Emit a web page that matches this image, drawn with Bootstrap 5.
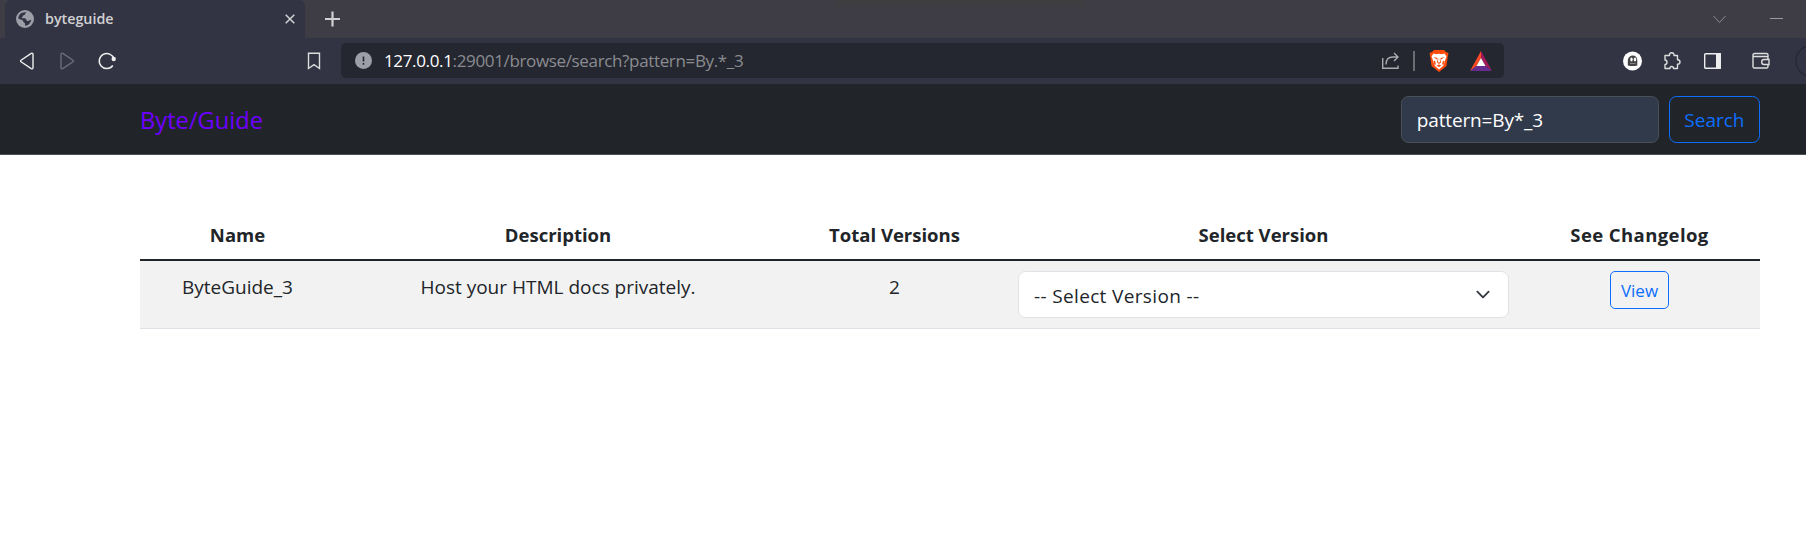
<!DOCTYPE html>
<html lang="en">
<head>
<meta charset="utf-8">
<title>byteguide</title>
<link href="https://cdn.jsdelivr.net/npm/bootstrap@5.3.0/dist/css/bootstrap.min.css" rel="stylesheet">
<style>
html{font-size:20px}
body{font-family:"Open Sans","Noto Sans",sans-serif;line-height:30px;overflow:hidden}
svg{display:block;flex:none}
.tabstrip{height:38px;background:linear-gradient(rgba(62,63,62,.8),rgba(62,63,62,0)) 835px 0/250px 10px no-repeat,#3e3d46;padding-left:5px}
.tab-item{width:300px;height:38px;background:#323443;border-radius:6px 6px 0 0;padding:0 10px 0 11px}
.tab-title{font-size:14.3px;font-weight:600;color:#d0d0d2;margin-left:11px;line-height:36px}
.toolbar{height:46px;background:#323443;padding-left:17px}
.addr{width:1163px;height:35px;margin-top:-1px;border-radius:5px;background:#242730;padding-left:14px}
.addr-text{font-size:17px;letter-spacing:-.35px;color:#8b8c90;margin-left:12px;line-height:33px;white-space:nowrap}
.addr-text b{font-weight:400;color:#fff}
.topbar{height:71px;background:#212529;border-bottom:1px solid #495057;padding:0 46px 0 140px}
.brand{font-size:23.7px;color:#6f00ff;text-decoration:none;padding-top:2px}
.query,.query:focus{width:258px;height:47px;background:#313a4b;border-color:#495057;color:#fff;letter-spacing:-.15px}
.fit{font-size:19px;line-height:30px;padding-top:8.5px;padding-bottom:6.5px}
.btn.fit{padding-inline:14.5px}
.fit-sm{font-size:17px;line-height:26.25px;padding:6px 9.5px 4px}
.listing{margin:54px 46px 0 140px}
.listing table{table-layout:fixed;font-size:19px}
.listing thead th{border-bottom:2px solid #212529;font-weight:700;font-size:18.5px;line-height:30px;padding:11px 10px 9px}
.listing thead th:last-child{letter-spacing:.4px}
.listing td{padding:11px 10px 9px}
.listing td.control{padding:10px}
.listing .form-select{letter-spacing:.35px;background-size:20px 15px}
</style>
</head>
<body>
<div class="tabstrip d-flex align-items-center">
  <div class="tab-item d-flex align-items-center">
    <svg width="18" height="18" viewBox="0 0 18 18"><circle cx="9" cy="9" r="9" fill="#9c9fa8"/><path d="M9 2.200h1.500c-.8 1-1.500 1-1.500 2 0 .8-1 1-2 1.300-.6.500 0 1.500-1.500 2.200 1 .8 3 .3 4 .8 1.500.8.500 2.300 2 2.500 1.500.2 1.800-.8 3.800-1.200C14.500 13 12.500 15.800 9 15.800v-2c0-1-2-1.500-2-3 0-1-2.500-1-4.700-2.300C2.500 5 5 2.300 9 2.200z" fill="#323443"/></svg>
    <span class="tab-title">byteguide</span>
    <svg class="ms-auto" width="10" height="10" viewBox="0 0 10 10"><path d="M.7.7l8.600 8.600M9.300.7L.7 9.300" stroke="#d3d3d5" stroke-width="1.500"/></svg>
  </div>
  <svg style="margin-left:19px" width="16" height="16" viewBox="0 0 16 16"><path d="M8.500 .5v15M1 8h15" stroke="#d0d0d2" stroke-width="2.200"/></svg>
  <svg style="margin-left:1373px" width="14" height="9" viewBox="0 0 14 9"><path d="M.5 1l6 6.500L12.500 1" fill="none" stroke="#8b8b90"/></svg>
  <svg style="margin-left:43px" width="14" height="3" viewBox="0 0 14 3"><path d="M0 .5h13" stroke="#9b9b9f"/></svg>
</div>
<div class="toolbar d-flex align-items-center">
  <svg width="20" height="20" viewBox="0 0 20 20"><path d="M14.200 2.300L4 9.200q-.9.800 0 1.600l10.200 6.900q1.600.6 1.800-1V3.300q-.2-1.600-1.800-1z" fill="none" stroke="#eee" stroke-width="1.400"/></svg>
  <svg style="margin-left:20px" width="20" height="20" viewBox="0 0 20 20"><path d="M5.800 2.300L16 9.200q.9.800 0 1.600L5.800 17.700q-1.600.6-1.800-1V3.300q.2-1.600 1.800-1z" fill="none" stroke="#6b6c77" stroke-width="1.400"/></svg>
  <svg style="margin-left:20px" width="20" height="20" viewBox="0 0 20 20"><path d="M17 8A7.500 7.500 0 1 0 15.800 14.500" fill="none" stroke="#eee" stroke-width="1.500"/><circle cx="16.700" cy="8" r="2.200" fill="#eee"/></svg>
  <svg style="margin-left:187px" width="20" height="20" viewBox="0 0 20 20"><path d="M4.500 2.200h11v15.300L10 13.700l-5.500 3.800z" fill="none" stroke="#ddd" stroke-width="1.400"/></svg>
  <div class="addr d-flex align-items-center" style="margin-left:17px">
    <svg width="17" height="17" viewBox="0 0 17 17"><circle cx="8.500" cy="8.500" r="8.500" fill="#9c9fa8"/><path d="M8.500 4.500v5M8.500 11v1.800" stroke="#242730" stroke-width="1.600"/></svg>
    <span class="addr-text"><b>127.0.0.1</b>:29001/browse/search?pattern=By.*_3</span>
    <svg class="ms-auto" width="18" height="18" viewBox="0 0 18 18"><path d="M1.700 6v10.300h15.300V13.500M5 12.500q0-7.500 7-7.500H16.500M13 1l4 4-4 4" fill="none" stroke="#aaabaf" stroke-width="1.400"/></svg>
    <svg style="margin-left:14px" width="2" height="20"><path d="M1 0v20" stroke="#85868b" stroke-width="1.500"/></svg>
    <svg style="margin-left:14px" width="20" height="22" viewBox="0 0 20 22"><path d="M5 0h10l2 2 2.500 1-.7 3.500L17.500 16 10 22 2.500 16 1.200 6.500.5 3 3 2z" fill="#fb4a0b"/><path d="M4.500 3.500l3 .7L10 3.800l2.500.4 3-.7 2 3-1.500 4-1.500 5-4.500 4-4.500-4L4 10.500l-1.500-4z" fill="#fff"/><path d="M4.500 7l4 1-.8 1.500zM15.500 7l-4 1 .8 1.500zM8.700 8.500h.6L9 12l1 .8 1-.8-.3-3.500h.6l.7 4-2 1.500-2-1.500zM6 10.500l.8 3.500-1 1.500-1.300-4zM14 10.500l-.8 3.500 1 1.500 1.300-4zM7.500 15.500l2.500-1 2.500 1L10 17z" fill="#fb4a0b"/></svg>
    <svg style="margin:0 12px 0 21px" width="22" height="20" viewBox="0 0 22 20"><path d="M11 0v7L6.500 15 0 20z" fill="#ff4a26"/><path d="M11 0l11 20-6.500-5L11 7z" fill="#a2195b"/><path d="M0 20l6.500-5h9l6.500 5z" fill="#662d91"/><path d="M11 7l4.500 8h-9z" fill="#fff"/></svg>
  </div>
  <svg style="margin-left:118px" width="20" height="20" viewBox="0 0 20 20"><circle cx="10.500" cy="10" r="9.500" fill="#fff"/><path d="M5.800 14.500V9q1-4.500 5-4.500T15.300 9v5.500l-2.300.5h-5z" fill="#444"/><ellipse cx="9.500" cy="8.500" rx="1.200" ry="2" fill="#fff"/><ellipse cx="13" cy="8.500" rx="1.200" ry="2" fill="#fff"/><path d="M8 12.500h5.500" stroke="#888"/></svg>
  <svg style="margin-left:20px" width="20" height="20" viewBox="0 0 20 20"><path d="M3 4.500h4.500Q7.200 1.800 9.700 1.800T12 4.500h3.500v4.200q2.500 0 2.500 2.200t-2.500 2.200v4.400h-4q0-2-1.800-2T8 17.500H3v-4q2 0 2-2.200T3 9z" fill="none" stroke="#ddd" stroke-width="1.400" stroke-linejoin="round"/></svg>
  <svg style="margin-left:21px" width="18" height="18" viewBox="0 0 18 18"><rect x="1.700" y="1.700" width="15.500" height="14.600" rx="1" fill="none" stroke="#eee" stroke-width="1.400"/><path d="M13 1h4.900v16H13z" fill="#eee"/></svg>
  <svg style="margin-left:31px" width="18" height="18" viewBox="0 0 18 18"><path d="M16 5.500V3Q16 1.500 14.500 1.500H2.500Q1 1.500 1 3v11.500Q1 16 2.500 16h12q1.500 0 1.500-1.500V13M1 4.500h13.500Q16 4.500 16 6v1.500M17 7.500h-5q-2.300 0-2.300 2.500t2.300 2.500h5z" fill="none" stroke="#ddd" stroke-width="1.400"/></svg>
  <svg style="margin-left:25px" width="11" height="34" viewBox="0 0 11 34"><circle cx="16.500" cy="17" r="15.500" fill="none" stroke="#252833" stroke-width="1.300"/></svg>
</div>
<nav class="topbar d-flex align-items-center">
  <a class="brand me-auto" href="#">Byte/Guide</a>
  <form class="d-flex gap-2">
    <input class="form-control query fit" type="text" value="pattern=By*_3" aria-label="Search">
    <button class="btn btn-outline-primary fit" type="button">Search</button>
  </form>
</nav>
<main class="listing">
  <table class="table table-striped text-center mb-0">
    <colgroup><col style="width:195px"><col style="width:446px"><col style="width:227px"><col style="width:511px"><col style="width:241px"></colgroup>
    <thead><tr><th>Name</th><th>Description</th><th>Total Versions</th><th>Select Version</th><th>See Changelog</th></tr></thead>
    <tbody><tr>
      <td>ByteGuide_3</td><td>Host your HTML docs privately.</td><td>2</td>
      <td class="control"><select class="form-select fit" aria-label="Version"><option>-- Select Version --</option></select></td>
      <td class="control"><button class="btn btn-sm btn-outline-primary fit-sm" type="button">View</button></td>
    </tr></tbody>
  </table>
</main>
<script src="https://cdn.jsdelivr.net/npm/bootstrap@5.3.0/dist/js/bootstrap.bundle.min.js"></script>
</body>
</html>
